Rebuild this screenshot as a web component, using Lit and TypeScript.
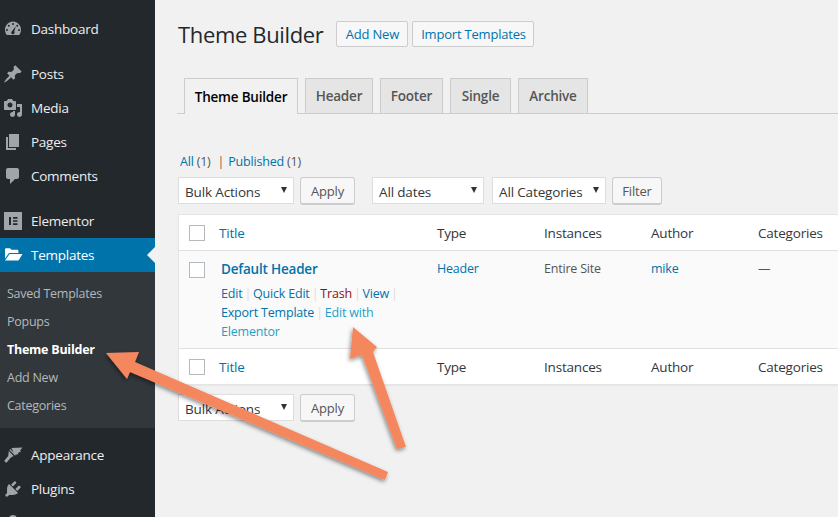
import { LitElement, html, css, svg } from "lit";
import { customElement } from "lit/decorators.js";

const I: Record<string, any> = {
  dash: svg`<path fill-rule="evenodd" d="M3.760 16h12.480c1.100-1.430 1.760-3.210 1.760-5.140 0-4.620-3.590-8.360-8-8.360s-8 3.740-8 8.360c0 1.930.66 3.710 1.760 5.140zM10 4a1 1 0 1 1 0 2 1 1 0 0 1 0-2zM5.800 5.800a1 1 0 1 1 0 2 1 1 0 0 1 0-2zM14.200 5.800a1 1 0 1 1 0 2 1 1 0 0 1 0-2zM4 10a1 1 0 1 1 0 2 1 1 0 0 1 0-2zM16 10a1 1 0 1 1 0 2 1 1 0 0 1 0-2zM12.800 7.300l-1.500 5.300a1.700 1.700 0 1 1-2.600-.2z"/>`,
  pin: svg`<path d="M10.440 3.020l1.820-1.820 6.360 6.350-1.830 1.820c-1.050-.68-2.480-.57-3.410.36l-.75.75c-.92.93-1.040 2.350-.35 3.410l-1.830 1.820-2.410-2.410-2.800 2.790c-.42.42-3.380 2.710-3.800 2.290s1.860-3.390 2.280-3.810l2.790-2.790L4.100 9.360l1.830-1.820c1.050.69 2.480.57 3.400-.36l.75-.75c.93-.92 1.040-2.350.36-3.410z"/>`,
  media: svg`<path fill-rule="evenodd" d="M13 11V4c0-.55-.45-1-1-1h-1.670L9 1H5L3.670 3H2c-.55 0-1 .45-1 1v7c0 .55.45 1 1 1h10c.55 0 1-.45 1-1zM7 4.500c1.380 0 2.500 1.120 2.500 2.500S8.380 9.500 7 9.500 4.500 8.380 4.500 7 5.620 4.500 7 4.500z"/><path d="M14 6h5v10.500c0 1.380-1.120 2.500-2.500 2.500S14 17.880 14 16.500s1.120-2.500 2.500-2.500c.17 0 .34.020.5.050V9h-3V6zm-4 8.050V13h2v3.500c0 1.380-1.120 2.500-2.500 2.500S7 17.880 7 16.500 8.120 14 9.500 14c.17 0 .34.020.5.050z"/>`,
  pages: svg`<path d="M6 15V2h10v13H6zm-1 1h8v2H3V5h2v11z"/>`,
  comment: svg`<path d="M5 2h9c1.100 0 2 .9 2 2v7c0 1.100-.9 2-2 2h-2l-5 5v-5H5c-1.100 0-2-.9-2-2V4c0-1.100.9-2 2-2z"/>`,
  elementor: svg`<path fill-rule="evenodd" d="M1 1h18v18H1zM6 6v8h2V6zM10 6v1.700h4.500V6zM10 9.150v1.700h4.500v-1.700zM10 12.300V14h4.500v-1.700z"/>`,
  folder: svg`<path d="M2 4.500c0-.8.500-1.300 1.300-1.300h3.700l1.500 1.500h5.700c.8 0 1.200.5 1.200 1.200V8H6L2 13.500z"/><path d="M6.500 9h13l-4 6.500H2z"/>`,
  brush: svg`<path d="M8.500 3l11-.5-2.500 3 1 1-3 1.500.2 1.300-2.700.4-.5 1.300z"/><path d="M7.300 4l4.800 5.200-.8.900L6.400 5z"/><path d="M5.800 6l4.800 5.100-3 1.700-3.700 4.500c-.9.900-3-.9-2.200-2l3.500-4.300z"/>`,
  plug: svg`<path d="M13.110 4.360L9.870 7.600 8 5.730l3.240-3.240c.35-.34 1.050-.2 1.560.32.52.51.66 1.210.31 1.550zm-8 1.770l.91-1.120 9.010 9.010-1.190.84c-.71.71-2.630 1.160-3.820 1.160H6.140L4.900 17.260c-.59.59-1.540.59-2.120 0-.59-.58-.59-1.530 0-2.120l1.240-1.240v-3.880c0-1.130.4-3.100 1.090-3.890zm7.260 3.970l3.240-3.240c.34-.35 1.040-.21 1.550.31.52.51.66 1.210.31 1.550l-3.240 3.250z"/>`,
  users: svg`<circle cx="10" cy="6" r="4"/>`,
};

const ic = (k: string) => html`<svg class="ic" viewBox="0 0 20 20" fill="currentColor">${I[k]}</svg>`;

@customElement("app-side")
class AppSide extends LitElement {
  static styles = css`
    :host { display: block; width: 155px; height: 517px; background: #23282d; overflow: hidden; flex: none; position: relative; }
    .list { padding-top: 12px; }
    .it { height: 34px; display: flex; align-items: center; padding-left: 3px; gap: 8px; color: #eee; font-size: 13.5px; letter-spacing: -.25px; box-sizing: border-box; }
    .it .ic { width: 20px; height: 20px; color: #a0a5aa; flex: none; }
    .sep { height: 11px; }
    .sep2 { height: 10px; }
    .cur { background: #0073aa; color: #fff; position: relative; }
    .cur .ic { color: #fff; }
    .cur::after { content: ""; position: absolute; right: 0; top: 9px; border: 8px solid transparent; border-right-color: #f1f1f1; border-left-width: 0; }
    .sub { background: #32373c; padding: 7px 0 9px; height: 156px; box-sizing: border-box; }
    .sub div { height: 28px; display: flex; align-items: center; padding-left: 7px; font-size: 12.5px; letter-spacing: -.25px; color: #b4b9be; }
    .sub .on { color: #fff; font-weight: 700; }
  `;
  render() {
    const it = (k: string, t: string, c = "") => html`<div class="it ${c}">${ic(k)}<span>${t}</span></div>`;
    return html`<div class="list">
      ${it("dash", "Dashboard")}<div class="sep"></div>
      ${it("pin", "Posts")}${it("media", "Media")}${it("pages", "Pages")}${it("comment", "Comments")}<div class="sep"></div>
      ${it("elementor", "Elementor")}${it("folder", "Templates", "cur")}
      <div class="sub"><div>Saved Templates</div><div>Popups</div><div class="on">Theme Builder</div><div>Add New</div><div>Categories</div></div>
      <div class="sep2"></div>
      ${it("brush", "Appearance")}${it("plug", "Plugins")}${it("users", "")}
    </div>`;
  }
}

@customElement("app-root")
export class AppRoot extends LitElement {
  static styles = css`
    :host { display: block; width: 838px; height: 517px; overflow: hidden; position: relative; font-family: "Open Sans", sans-serif; background: #f1f1f1; color: #444; }
    .page { display: flex; height: 517px; }
    .main { flex: 1; min-width: 0; padding-left: 23px; font-size: 12.5px; letter-spacing: -.2px; overflow: hidden; }
    a { color: #0073aa; }
    .head { display: flex; align-items: center; height: 30px; margin-top: 19px; }
    h1 { margin: 0 13px 0 0; font-size: 22px; letter-spacing: -.35px; font-weight: 400; color: #23282d; }
    .pt { height: 26px; box-sizing: border-box; border: 1px solid #ccc; border-radius: 2px; background: #f7f7f7; color: #0073aa; display: flex; align-items: center; justify-content: center; font-weight: 500; font-size: 13px; white-space: nowrap; flex: none; }
    .pt + .pt { margin-left: 4px; }
    .p1 { width: 72px; } .p2 { width: 122px; }
    .tabs { margin: 29px -10px 0 -1px; display: grid; grid-template-columns: 114px 68px 63px 61px 70px; gap: 7px; padding-left: 7px; height: 35px; border-bottom: 1px solid #ccc; font-size: 13.5px; letter-spacing: -.2px; font-weight: 600; }
    .tab { height: 35px; box-sizing: border-box; border: 1px solid #ccc; border-bottom: none; background: #e5e5e5; color: #555; display: flex; align-items: center; justify-content: center; }
    .tab.on { background: #f1f1f1; height: 36px; color: #000; }
    .sub { margin-top: 37px; height: 20px; display: flex; align-items: center; gap: 6px; color: #555; padding-left: 2px; }
    .sub i { font-style: normal; color: #8a5a44; margin: 0 -2px 0 1px; }
    .bar { display: flex; align-items: flex-start; height: 28px; margin-top: 6px; margin-bottom: 9px; }
    .bar2 { margin-top: 9px; }
    .sel { height: 27px; box-sizing: border-box; border: 1px solid #ddd; background: #fff; display: flex; align-items: center; justify-content: space-between; padding: 2px 6px 0 6px; font-size: 13.5px; letter-spacing: -.15px; color: #32373c; }
    .sel::after { content: ""; border: 3px solid transparent; border-top: 6px solid #333; border-bottom: 0; margin-top: -4px; flex: none; }
    .btn { height: 28px; box-sizing: border-box; border: 1px solid #ccc; border-bottom-width: 2px; border-radius: 3px; background: #f7f7f7; color: #555; display: flex; align-items: center; justify-content: center; font-size: 13px; }
    .w116 { width: 116px; } .w113 { width: 112px; } .w114 { width: 114px; }
    .b55 { width: 55px; } .b50 { width: 50px; }
    .ml6 { margin-left: 6px; } .ml18 { margin-left: 17px; } .ml8 { margin-left: 8px; }
    .tbl { background: #fff; border: 1px solid #e5e5e5; box-shadow: 0 1px 1px rgba(0,0,0,.04); margin-right: -20px; border-right: none; }
    .row { display: grid; grid-template-columns: 40px 218px 107px 107px 107px 1fr; }
    .row > div { padding-top: 9px; }
    .hr { height: 35px; font-size: 13.5px; color: #32373c; }
    .body { height: 97px; background: #fafafa; border-top: 1px solid #e1e1e1; border-bottom: 1px solid #e1e1e1; color: #555; }
    .cb { width: 16px; height: 16px; box-sizing: border-box; border: 1px solid #b4b9be; background: #fff; margin: 1px 0 0 10px; }
    .body .cb { margin-top: 2px; }
    .ttl { font-size: 13.5px; font-weight: 600; color: #0073aa; margin-left: 2px; }
    .acts { margin: 6px 0 0 2px; width: 195px; line-height: 19px; }
    .acts s { text-decoration: none; color: #ddd; margin: 0 2px; }
    .acts span { white-space: nowrap; }
    .acts .tr { color: #8a0f0f; }
    .acts .el { color: #1e9fc9; }
    .ov { position: absolute; left: 0; top: 0; pointer-events: none; }
  `;
  render() {
    const hdr = () => html`<div class="row hr"><div><div class="cb"></div></div><div><a>Title</a></div><div>Type</div><div>Instances</div><div>Author</div><div>Categories</div></div>`;
    return html`<div class="page"><app-side></app-side><div class="main">
      <div class="head"><h1>Theme Builder</h1><div class="pt p1">Add New</div><div class="pt p2">Import Templates</div></div>
      <div class="tabs"><div class="tab on">Theme Builder</div><div class="tab">Header</div><div class="tab">Footer</div><div class="tab">Single</div><div class="tab">Archive</div></div>
      <div class="sub"><span><a>All</a> (1)</span><i>|</i><span><a>Published</a> (1)</span></div>
      <div class="bar"><div class="sel w116">Bulk Actions</div><div class="btn b55 ml6">Apply</div><div class="sel w113 ml18">All dates</div><div class="sel w114 ml8">All Categories</div><div class="btn b50 ml6">Filter</div></div>
      <div class="tbl">${hdr()}
        <div class="row body"><div><div class="cb"></div></div><div><div class="ttl">Default Header</div><div class="acts"><a>Edit</a><s>|</s><span><a>Quick Edit</a></span><s>|</s><span class="tr">Trash</span><s>|</s><a>View</a><s>|</s> <span><a>Export Template</a></span><s>|</s><span class="el">Edit with</span> <span class="el">Elementor</span></div></div><div><a>Header</a></div><div>Entire Site</div><div><a>mike</a></div><div>—</div></div>
        ${hdr()}</div>
      <div class="bar bar2"><div class="sel w116">Bulk Actions</div><div class="btn b55 ml6">Apply</div></div>
    </div></div>
    <svg class="ov" width="838" height="517">
      <defs><filter id="sh" x="-10%" y="-10%" width="120%" height="120%"><feDropShadow dx="-1" dy="2" stdDeviation="2" flood-color="#000" flood-opacity=".45"/></filter></defs>
      <polygon filter="url(#sh)" fill="#f5875f" points="106,353 139,352 135,362 388,472 385,480 130,372 127,379"/>
      <polygon filter="url(#sh)" fill="#f5875f" points="353,327 377,347 373,352 406,447 397,449 362,355 350,359"/>
    </svg>`;
  }
}
void AppSide;
